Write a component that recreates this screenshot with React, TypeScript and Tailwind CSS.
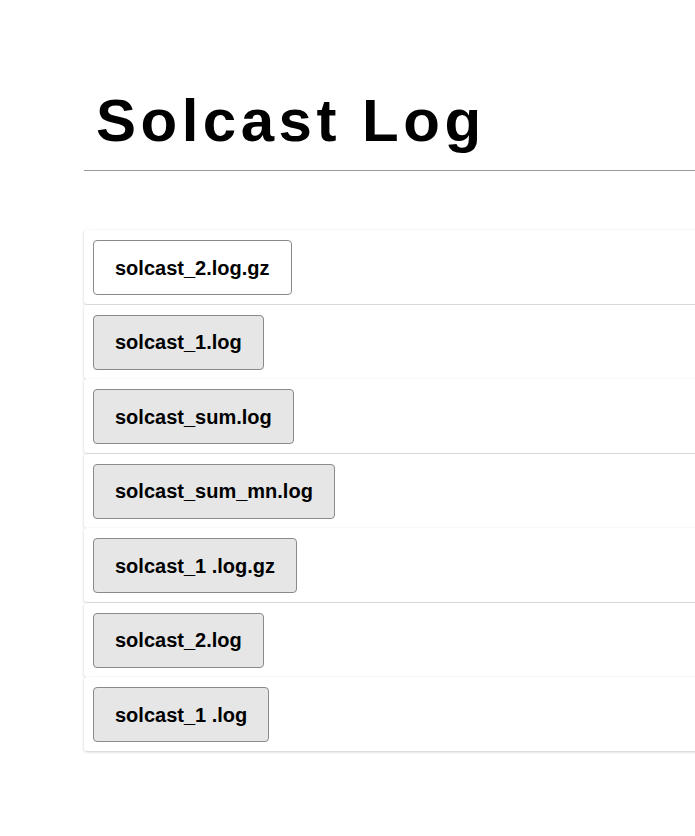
import React from "react";

const files = [
  "solcast_2.log.gz",
  "solcast_1.log",
  "solcast_sum.log",
  "solcast_sum_mn.log",
  "solcast_1 .log.gz",
  "solcast_2.log",
  "solcast_1 .log",
];

export default function App() {
  return (
    <div className="w-[695px] h-[836px] overflow-hidden bg-white" style={{ fontFamily: '"Liberation Sans", Arial, sans-serif' }}>
      <div className="pl-[84px] mr-[-30px]">
        <h1 className="pt-[85px] pl-[12px] text-[60px] leading-[72px] font-bold tracking-[4.5px] text-black">Solcast Log</h1>
        <div className="mt-[13px] h-px bg-[#999]" />
        <div className="mt-[59px] flex flex-col gap-[0.5px]">
          {files.map((f, i) => (
            <div key={f} className="h-[74px] rounded-[3px] bg-white shadow-[0_1px_3px_rgba(0,0,0,0.2)] flex items-start pt-[10px] pl-[9px]">
              <button
                className={`h-[55px] px-[21px] rounded-[4px] border border-[#8a8a8a] text-[20px] font-bold text-black ${i === 0 ? "bg-white" : "bg-[#e6e6e6]"}`}
              >
                {f}
              </button>
            </div>
          ))}
        </div>
      </div>
    </div>
  );
}
